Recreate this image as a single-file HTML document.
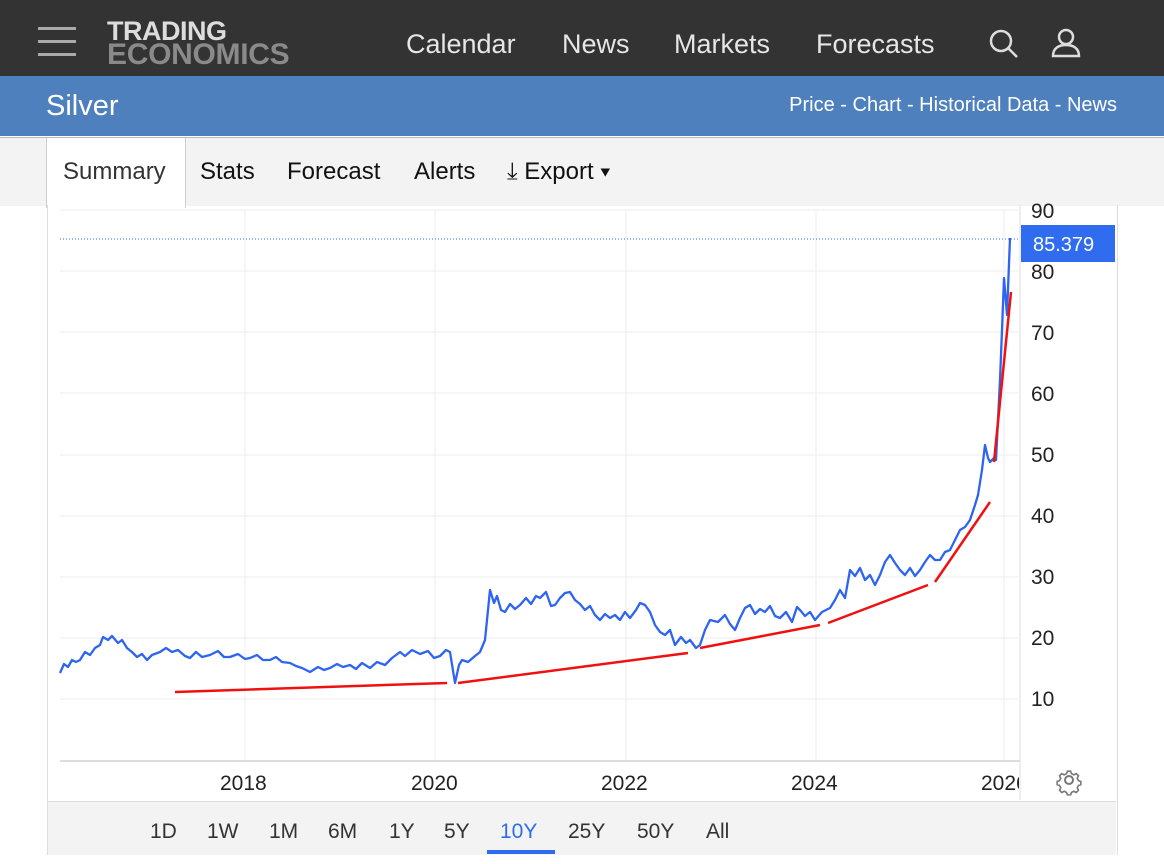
<!DOCTYPE html><html><head><style>
body{margin:0;width:1164px;height:864px;overflow:hidden;background:#fff;font-family:"Liberation Sans",sans-serif;position:relative}
.top{position:absolute;left:0;top:0;width:1164px;height:76px;background:#333}
.nav{position:absolute;top:29px;color:#e6e6e6;font-size:27px}
.blue{position:absolute;left:0;top:76px;width:1164px;height:60px;background:#4e80bd}
.tabs{position:absolute;left:0;top:137px;width:1164px;height:68px;background:#f3f3f3;border-top:1px solid #bbb}
.tab{position:absolute;top:20px;font-size:24px;color:#111}
.yl{position:absolute;left:1031px;font-size:21px;color:#222}
.xl{position:absolute;top:772px;font-size:21px;color:#222}
.rg{position:absolute;top:820px;font-size:21px;color:#333}
</style></head><body>
<div class="top">
<div style="position:absolute;left:38px;top:27px;width:38px;height:3px;background:#aaa;box-shadow:0 13px 0 #aaa,0 26px 0 #aaa"></div>
<div style="position:absolute;left:107px;top:19px;font-weight:bold;font-size:27px;color:#ddd;line-height:24px;letter-spacing:-0.5px">TRADING<br><span style="color:#8a8a8a;font-size:30px;letter-spacing:-0.3px">ECONOMICS</span></div>
<div class="nav" style="left:406px">Calendar</div><div class="nav" style="left:562px">News</div><div class="nav" style="left:674px">Markets</div><div class="nav" style="left:816px">Forecasts</div>
<svg style="position:absolute;left:988px;top:28px" width="32" height="32" fill="none" stroke="#ddd" stroke-width="2.5"><circle cx="13" cy="13" r="10"/><line x1="20" y1="20" x2="29" y2="29"/></svg>
<svg style="position:absolute;left:1050px;top:28px" width="32" height="30" fill="none" stroke="#ddd" stroke-width="2.5"><circle cx="16" cy="9" r="7"/><path d="M3 28c0-8 6-11 13-11s13 3 13 11z"/></svg>
</div>
<div class="blue"><div style="position:absolute;left:46px;top:14px;font-size:29px;color:#fff">Silver</div>
<div style="position:absolute;right:47px;top:18px;font-size:20px;color:#fff">Price - Chart - Historical Data - News</div></div>
<div class="tabs">
<div style="position:absolute;left:46px;top:0;width:138px;height:70px;background:#fff;border-left:1px solid #ccc;border-right:1px solid #ccc"></div>
<div class="tab" style="left:63px;color:#333">Summary</div><div class="tab" style="left:200px">Stats</div><div class="tab" style="left:287px">Forecast</div><div class="tab" style="left:414px">Alerts</div>
<div class="tab" style="left:507px">⤓ Export ▾</div></div>
<div style="position:absolute;left:47px;top:205px;width:1069px;height:650px;border-left:1px solid #ddd;border-right:1px solid #ddd"></div>
<div style="position:absolute;left:48px;top:801px;width:1068px;height:53px;background:#f3f3f3;border-top:1px solid #ddd"></div>
<svg style="position:absolute;left:0;top:0" width="1164" height="864">
<g stroke="#eee" stroke-width="1">
<line x1="60" y1="210" x2="1018" y2="210"/><line x1="60" y1="271" x2="1018" y2="271"/><line x1="60" y1="332" x2="1018" y2="332"/><line x1="60" y1="393" x2="1018" y2="393"/><line x1="60" y1="455" x2="1018" y2="455"/><line x1="60" y1="516" x2="1018" y2="516"/><line x1="60" y1="577" x2="1018" y2="577"/><line x1="60" y1="638" x2="1018" y2="638"/><line x1="60" y1="699" x2="1018" y2="699"/>
<line x1="245" y1="210" x2="245" y2="760"/><line x1="435" y1="210" x2="435" y2="760"/><line x1="626" y1="210" x2="626" y2="760"/><line x1="816" y1="210" x2="816" y2="760"/><line x1="1004" y1="210" x2="1004" y2="760"/>
</g>
<line x1="60" y1="761" x2="1020" y2="761" stroke="#ddd" stroke-width="2"/>
<line x1="1020" y1="205" x2="1020" y2="800" stroke="#ddd"/>
<line x1="60" y1="239" x2="1018" y2="239" stroke="#3b6fe6" stroke-dasharray="1,2"/>
<polyline fill="none" stroke="#2e64f0" stroke-width="2.3" stroke-linejoin="round" points="60,673 64,664 68,667 72,660 76,662 80,660 85,652 90,655 95,648 100,645 103,637 108,640 112,636 118,643 122,640 127,648 132,652 137,657 142,654 147,660 152,655 160,652 166,648 172,652 178,650 185,656 190,658 196,652 202,657 210,655 218,651 224,657 230,657 238,654 245,659 250,658 257,655 263,660 270,660 276,657 282,662 290,663 296,666 302,668 310,672 318,667 324,670 330,668 337,664 343,667 350,665 356,669 362,663 370,668 377,662 385,665 392,658 400,652 405,656 412,650 420,654 428,651 434,658 440,656 446,650 450,652 455,683 459,665 462,660 468,662 475,656 480,652 485,640 490,590 494,603 497,596 501,610 505,612 510,604 515,609 520,605 526,598 531,604 536,596 540,598 546,592 551,606 555,605 560,598 565,593 570,592 575,600 580,604 585,610 590,606 595,615 600,620 605,614 610,618 615,615 620,620 625,612 630,618 636,610 640,603 645,605 650,612 655,625 660,632 665,635 670,630 675,645 681,637 686,643 690,640 696,648 700,645 705,630 710,620 718,622 725,615 730,624 735,630 740,618 745,608 750,605 755,614 760,609 765,612 770,606 775,616 780,618 786,612 792,622 797,607 800,610 805,616 810,612 815,620 822,612 830,608 835,600 840,590 845,598 850,570 855,576 860,568 865,580 870,575 875,585 880,575 885,562 890,555 895,563 900,570 905,575 910,568 915,576 920,570 925,562 930,555 935,560 940,560 945,552 950,550 955,540 960,530 965,527 970,520 975,505 978,495 982,470 985,445 988,458 990,462 994,458 996,460 998,420 1000,380 1002,330 1004,278 1007,315 1010,238"/>
<g stroke="#f01010" stroke-width="2.5"><line x1="175" y1="692" x2="447" y2="683"/><line x1="458" y1="683" x2="688" y2="653"/><line x1="700" y1="648" x2="820" y2="625"/><line x1="828" y1="623" x2="928" y2="585"/><line x1="935" y1="582" x2="990" y2="502"/><line x1="994" y1="462" x2="1011" y2="292"/></g>
<rect x="1021" y="225" width="94" height="37" fill="#2f6cf0"/>
<text x="1033" y="251" fill="#fff" font-size="20" font-family="Liberation Sans">85.379</text>
<g transform="translate(1069,780)" fill="none" stroke="#777" stroke-width="2"><circle r="4"/><path d="M-2,-11h4l1,3 3,1.5 3,-1.5 2.8,2.8 -1.5,3 1.5,3 3,1v4l-3,1 -1.5,3 1.5,3 -2.8,2.8 -3,-1.5 -3,1.5 -1,3h-4l-1,-3 -3,-1.5 -3,1.5 -2.8,-2.8 1.5,-3 -1.5,-3 -3,-1v-4l3,-1 1.5,-3 -1.5,-3 2.8,-2.8 3,1.5 3,-1.5z" transform="scale(0.8)"/></g>
<rect x="487" y="850" width="68" height="4" fill="#2f6cf0"/>
</svg>
<div class="yl" style="top:200px">90</div><div class="yl" style="top:261px">80</div><div class="yl" style="top:322px">70</div><div class="yl" style="top:383px">60</div><div class="yl" style="top:444px">50</div><div class="yl" style="top:505px">40</div><div class="yl" style="top:566px">30</div><div class="yl" style="top:627px">20</div><div class="yl" style="top:688px">10</div>
<div class="xl" style="left:220px">2018</div><div class="xl" style="left:411px">2020</div><div class="xl" style="left:601px">2022</div><div class="xl" style="left:791px">2024</div><div class="xl" style="left:981px;width:38px;overflow:hidden">2026</div>
<div class="rg" style="left:150px">1D</div><div class="rg" style="left:207px">1W</div><div class="rg" style="left:269px">1M</div><div class="rg" style="left:328px">6M</div><div class="rg" style="left:389px">1Y</div><div class="rg" style="left:444px">5Y</div><div class="rg" style="left:500px;color:#2f6cf0">10Y</div><div class="rg" style="left:568px">25Y</div><div class="rg" style="left:637px">50Y</div><div class="rg" style="left:706px">All</div>
</body></html>
